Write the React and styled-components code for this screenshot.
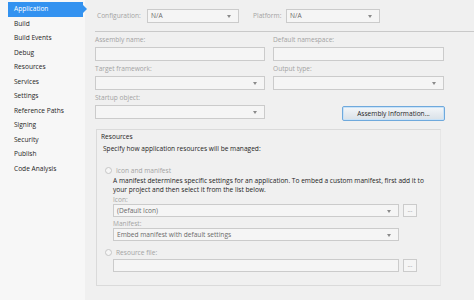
import React from "react";
import styled, { createGlobalStyle } from "styled-components";

const GlobalStyle = createGlobalStyle`
  body {
    margin: 0;
    font-family: "Open Sans", "Noto Sans", sans-serif;
    font-size: 6.6px;
    color: #1e1e1e;
  }
  * { box-sizing: border-box; }
`;

const Window = styled.div`
  display: flex;
  width: 474px;
  height: 300px;
  overflow: hidden;
  background: #f0f0f0;
`;

const Sidebar = styled.nav`
  width: 85px;
  flex-shrink: 0;
  background: #f7f7f7;
  padding-top: 2px;
  display: flex;
  flex-direction: column;
`;

const NavItem = styled.div`
  position: relative;
  height: 14.5px;
  line-height: 14.5px;
  margin-left: 8px;
  width: 75px;
  padding-left: 6px;
  white-space: nowrap;
  color: ${(p) => (p.$active ? "#fff" : "#1e1e1e")};
  background: ${(p) => (p.$active ? "#3392f0" : "transparent")};

  &::after {
    content: "";
    display: ${(p) => (p.$active ? "block" : "none")};
    position: absolute;
    right: -4px;
    top: 3px;
    border-left: 4px solid #3392f0;
    border-top: 4px solid transparent;
    border-bottom: 4px solid transparent;
  }
`;

const Main = styled.main`
  flex: 1;
  display: flex;
  flex-direction: column;
`;

const TopBar = styled.div`
  display: flex;
  align-items: center;
  height: 32px;
  margin-left: 10px;
  padding: 1px 0 0 2px;
  border-bottom: 1px solid #c9c9c9;
`;

const Label = styled.div`
  color: #a3a3a3;
  width: ${(p) => p.$width || "auto"};
  height: ${(p) => p.$height || "12px"};
  line-height: ${(p) => p.$height || "12px"};
  white-space: nowrap;
`;

const Box = styled.div`
  position: relative;
  width: ${(p) => p.$width || "100%"};
  height: ${(p) => p.$height || "14px"};
  line-height: ${(p) => (p.$height ? `calc(${p.$height} - 2px)` : "12px")};
  padding-left: 3px;
  border: 1px solid #cbcbcb;
  background: #f5f5f5;
  color: #6a6a6a;
  flex-shrink: 0;
  white-space: nowrap;
  margin-right: ${(p) => p.$gap || "0"};

  &::after {
    content: "";
    display: ${(p) => (p.$arrow ? "block" : "none")};
    position: absolute;
    right: 7px;
    top: 50%;
    margin-top: -1px;
    border-top: 3px solid #8a8a8a;
    border-left: 2.5px solid transparent;
    border-right: 2.5px solid transparent;
  }
`;

const Form = styled.div`
  display: grid;
  grid-template-columns: 170px 171px;
  column-gap: 8px;
  row-gap: 2px;
  padding: 2px 0 0 10px;
`;

const Field = styled.div`
  display: flex;
  flex-direction: column;
  gap: 1px;
`;

const ButtonCell = styled.div`
  display: flex;
  justify-content: flex-end;
  align-items: flex-end;
`;

const Button = styled.button`
  width: 103px;
  height: 15px;
  margin: 0 -1px -2px 0;
  padding: 0;
  border: 1px solid #6fa9dc;
  border-radius: 2px;
  background: linear-gradient(#f4f7fa, #e6ebf0 50%, #d9e1e8);
  box-shadow: inset 0 0 0 1px #c8e2f8;
  font: inherit;
  color: #1e1e1e;
`;

const Group = styled.section`
  width: 345px;
  height: 157px;
  margin: 10px 0 0 11px;
  padding: 1px 0 0 4px;
  border: 1px solid #dadada;
  border-right-color: #e6e6e6;
`;

const Heading = styled.div`
  height: 11px;
  line-height: 11px;
`;

const Intro = styled.div`
  height: 11px;
  line-height: 11px;
  margin: 1px 0 0 2px;
`;

const RadioRow = styled.div`
  display: flex;
  align-items: center;
  height: 11px;
  margin: ${(p) => p.$margin};
  padding-left: 2px;
  color: #a3a3a3;
`;

const Radio = styled.span`
  width: 7px;
  height: 7px;
  border-radius: 50%;
  border: 1px solid #c6c6c6;
  background: #f6f6f6;
  margin-right: 4px;
`;

const Indent = styled.div`
  padding-left: 12px;
  display: flex;
  flex-direction: column;
`;

const Paragraph = styled.p`
  margin: 0;
  line-height: 9px;
  white-space: nowrap;
`;

const SubLabel = styled(Label)`
  height: 9px;
  line-height: 9px;
  margin-top: ${(p) => p.$top || "0"};
`;

const PickerRow = styled.div`
  display: flex;
  align-items: center;
  gap: 4px;
  margin-top: ${(p) => p.$top || "0"};
`;

const Ellipsis = styled.div`
  width: 14px;
  height: 13px;
  border: 1px solid #cbcbcb;
  background: #f5f5f5;
  color: #a3a3a3;
  text-align: center;
  line-height: 9px;
`;

const navItems = [
  "Application",
  "Build",
  "Build Events",
  "Debug",
  "Resources",
  "Services",
  "Settings",
  "Reference Paths",
  "Signing",
  "Security",
  "Publish",
  "Code Analysis",
];

export default function App() {
  return (
    <Window>
      <GlobalStyle />
      <Sidebar>
        {navItems.map((item) => (
          <NavItem key={item} $active={item === "Application"}>
            {item}
          </NavItem>
        ))}
      </Sidebar>
      <Main>
        <TopBar>
          <Label $width="50px">Configuration:</Label>
          <Box $width="92px" $arrow $gap="14px">N/A</Box>
          <Label $width="33px">Platform:</Label>
          <Box $width="94px" $arrow>N/A</Box>
        </TopBar>

        <Form>
          <Field>
            <Label>Assembly name:</Label>
            <Box />
          </Field>
          <Field>
            <Label>Default namespace:</Label>
            <Box />
          </Field>
          <Field>
            <Label>Target framework:</Label>
            <Box $arrow />
          </Field>
          <Field>
            <Label>Output type:</Label>
            <Box $arrow />
          </Field>
          <Field>
            <Label>Startup object:</Label>
            <Box $arrow />
          </Field>
          <ButtonCell>
            <Button>Assembly Information...</Button>
          </ButtonCell>
        </Form>

        <Group>
          <Heading>Resources</Heading>
          <Intro>Specify how application resources will be managed:</Intro>
          <RadioRow $margin="11px 0 0 2px">
            <Radio />
            Icon and manifest
          </RadioRow>
          <Indent>
            <Paragraph>
              A manifest determines specific settings for an application. To
              embed a custom manifest, first add it to
              <br />
              your project and then select it from the list below.
            </Paragraph>
            <SubLabel $top="1px">Icon:</SubLabel>
            <PickerRow>
              <Box $width="286px" $height="13px" $arrow>(Default Icon)</Box>
              <Ellipsis>...</Ellipsis>
            </PickerRow>
            <SubLabel $top="2px">Manifest:</SubLabel>
            <Box $width="286px" $height="13px" $arrow>
              Embed manifest with default settings
            </Box>
          </Indent>
          <RadioRow $margin="6px 0 0 2px">
            <Radio />
            Resource file:
          </RadioRow>
          <Indent>
            <PickerRow $top="1px">
              <Box $width="286px" $height="13px" />
              <Ellipsis>...</Ellipsis>
            </PickerRow>
          </Indent>
        </Group>
      </Main>
    </Window>
  );
}
